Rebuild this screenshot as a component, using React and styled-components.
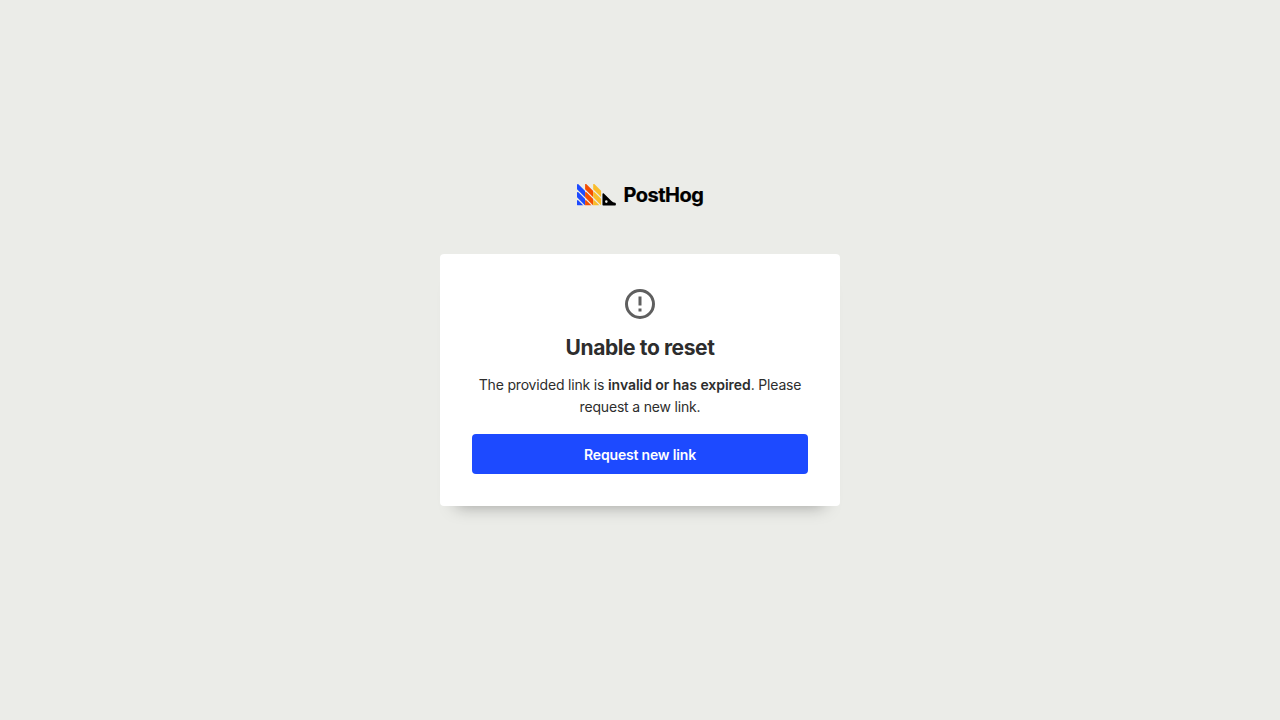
import React from "react";
import styled, { createGlobalStyle } from "styled-components";

const GlobalStyle = createGlobalStyle`
  * { box-sizing: border-box; }
  body { margin: 0; background: #ebece8; }
`;
const Page = styled.main`
  min-height: 100vh;
  display: flex;
  flex-direction: column;
  align-items: center;
  padding-top: 182px;
  font-family: Inter, sans-serif;
  color: #2d2d2d;
`;
const Logo = styled.svg`
  display: block;
  width: 130px;
  height: 28px;
  margin-bottom: 44px;
`;
const Wordmark = styled.text`
  font: 700 20px Inter, sans-serif;
  fill: #000;
  stroke: #000;
  stroke-width: 0.2px;
`;
const Card = styled.section`
  width: 400px;
  height: 252px;
  padding: 32px;
  border-radius: 4px;
  background: #fff;
  box-shadow: 0 16px 16px -16px rgba(0, 0, 0, 0.35);
  display: flex;
  flex-direction: column;
  align-items: center;
`;
const AlertIcon = styled.svg`
  display: block;
  flex: none;
  width: 36px;
  height: 36px;
  fill: #5f5f5f;
`;
const Title = styled.h1`
  margin: 10px 0 10px;
  font-size: 21px;
  line-height: 32px;
  font-weight: 700;
  letter-spacing: -0.4px;
  white-space: nowrap;
`;
const Message = styled.p`
  margin: 0 0 16px;
  font-size: 14px;
  line-height: 22px;
  letter-spacing: -0.18px;
  text-align: center;
  strong {
    font-weight: 600;
    letter-spacing: -0.05px;
  }
`;
const Button = styled.button`
  flex: none;
  width: 100%;
  height: 40px;
  border: 0;
  border-radius: 4px;
  padding: 0;
  background: #1d4aff;
  color: #fff;
  font: 600 14px Inter, sans-serif;
  letter-spacing: -0.18px;
`;

const STRIPES = [
  { x: 0, color: "#1d4aff" },
  { x: 10, color: "#f54e00" },
  { x: 20, color: "#f9bd2b" },
];

function BrandLogo() {
  return (
    <Logo viewBox="0 0 130 28" role="img" aria-label="PostHog">
      <defs>
        <clipPath id="mark">
          <rect x="0" y="2.4" width="30" height="26.6" rx="0.8" />
        </clipPath>
      </defs>
      <g transform="translate(2 0) scale(.81)">
        <g clipPath="url(#mark)">
          {STRIPES.map(({ x, color }) => (
            <path
              key={x}
              fill={color}
              d={`M${x} 3.4q0-1.7 1.7-.7l8.3 8.3v7.9L${x} 8.9zM${x} 13.4q0-1.7 1.7-.7l8.3 8.3v7.9L${x} 18.9zM${x} 23.4q0-1.7 1.7-.7l6.3 6.3H${x}z`}
            />
          ))}
        </g>
        <path
          fillRule="evenodd"
          d="M42.525 23.531l-9.413-9.413c-.63-.63-1.707-.184-1.707.707v13.167a1 1 0 0 0 1 1h14.58a1 1 0 0 0 1-1v-1.2c0-.552-.45-.993-.997-1.068a7.82 7.82 0 0 1-4.463-2.193zm-6.322 2.262a1.6 1.6 0 1 1 0-3.2 1.6 1.6 0 0 1 0 3.2z"
        />
      </g>
      <Wordmark x="48.6" y="20" textLength="80.2" lengthAdjust="spacing">PostHog</Wordmark>
    </Logo>
  );
}

export default function App() {
  return (
    <>
      <GlobalStyle />
      <Page>
        <BrandLogo />
        <Card>
          <AlertIcon viewBox="0 0 24 24" aria-hidden="true">
            <path d="M11 15h2v2h-2zm0-8h2v6h-2zm1-5a10 10 0 1 0 0 20 10 10 0 0 0 0-20zm0 18a8 8 0 1 1 0-16 8 8 0 0 1 0 16z" />
          </AlertIcon>
          <Title>Unable to reset</Title>
          <Message>
            The provided link is <strong>invalid or has expired</strong>. Please request a new link.
          </Message>
          <Button type="button">Request new link</Button>
        </Card>
      </Page>
    </>
  );
}
